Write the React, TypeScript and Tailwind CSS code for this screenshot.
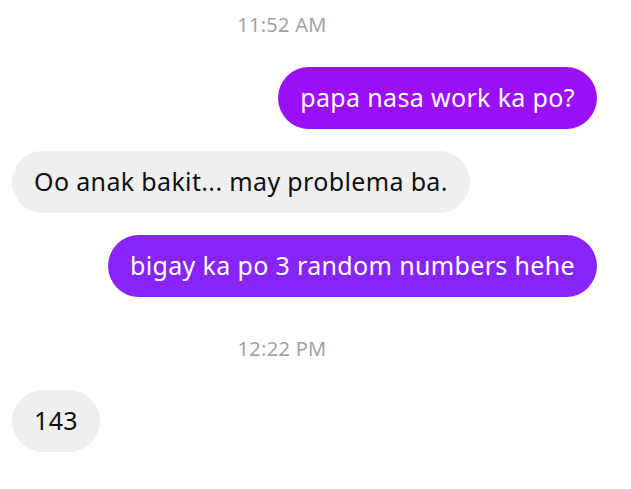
import React from 'react';

type Msg =
  | { kind: 'time'; text: string }
  | { kind: 'out'; text: string; color: string }
  | { kind: 'in'; text: string };

const messages: Msg[] = [
  { kind: 'time', text: '11:52 AM' },
  { kind: 'out', text: 'papa nasa work ka po?', color: 'bg-[#9a10f9]' },
  { kind: 'in', text: 'Oo anak bakit... may problema ba.' },
  { kind: 'out', text: 'bigay ka po 3 random numbers hehe', color: 'bg-[#8724f8]' },
  { kind: 'time', text: '12:22 PM' },
  { kind: 'in', text: '143' },
];

const App = () => {
  return (
    <div className="w-[631px] h-[489px] bg-white overflow-hidden flex flex-col pl-3 pr-[34px] pt-[12px] font-['Noto_Sans',sans-serif]">
      {messages.map((m, i) => {
        if (m.kind === 'time') {
          return (
            <div
              key={i}
              className={`h-[26px] leading-[26px] text-[20px] tracking-[0.3px] text-[#a3a3a3] text-center pr-[45px] ${i === 0 ? 'mb-[29px]' : 'mt-[17px] mb-[28px]'}`}
            >
              {m.text}
            </div>
          );
        }
        const out = m.kind === 'out';
        return (
          <div key={i} className={`flex ${out ? 'justify-end' : 'justify-start'} mb-[22px]`}>
            <div
              className={`h-[62px] rounded-full px-[22px] flex items-center text-[25px] tracking-[0.35px] whitespace-nowrap ${
                out ? `${m.color} text-white` : 'bg-[#efefef] text-[#111111]'
              }`}
            >
              {m.text}
            </div>
          </div>
        );
      })}
    </div>
  );
};

export default App;
